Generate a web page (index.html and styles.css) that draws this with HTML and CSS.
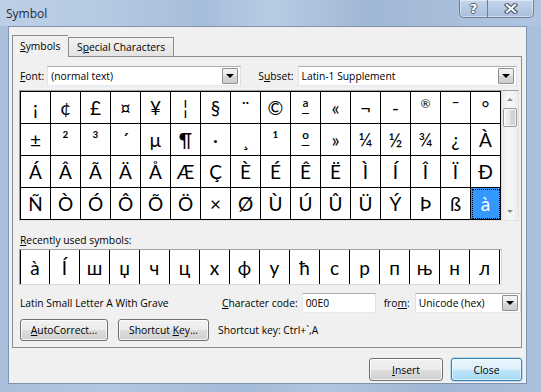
FILE: index.html
```html
<!DOCTYPE html>
<html lang="en">
<head>
    <meta charset="UTF-8">
    <meta name="viewport" content="width=device-width, initial-scale=1.0">
    <title>Symbol</title>
    <link rel="stylesheet" href="styles.css">
</head>
<body>
<div class="window">
    <div class="titlebar">
        <span class="title">Symbol</span>
        <div class="caption-btns">
            <span class="cbtn help">?</span>
            <span class="cbtn close">
                <svg width="14" height="11" viewBox="0 0 14 11">
                    <path d="M3 2 L11 9 M11 2 L3 9" stroke="#4d5d73" stroke-width="4.4" stroke-linecap="square"/>
                    <path d="M3 2 L11 9 M11 2 L3 9" stroke="#fff" stroke-width="2.2" stroke-linecap="square"/>
                </svg>
            </span>
        </div>
    </div>

    <div class="client">
        <div class="tabs">
            <div class="tab active"><u>S</u>ymbols</div>
            <div class="tab">S<u>p</u>ecial Characters</div>
        </div>

        <div class="page">
            <div class="select-row">
                <span class="lbl"><u>F</u>ont:</span>
                <div class="combo font-combo">
                    <span class="combo-text">(normal text)</span>
                    <span class="drop"><i></i></span>
                </div>
                <span class="lbl subset-lbl">S<u>u</u>bset:</span>
                <div class="combo subset-combo">
                    <span class="combo-text">Latin-1 Supplement</span>
                    <span class="drop"><i></i></span>
                </div>
            </div>

            <div class="charmap">
                <div class="symgrid" id="symgrid"></div>
                <div class="vscroll">
                    <span class="arrow up"></span>
                    <span class="thumb"></span>
                    <span class="track"></span>
                    <span class="arrow down"></span>
                </div>
            </div>

            <div class="recent-lbl"><u>R</u>ecently used symbols:</div>
            <div class="recent" id="recent"></div>

            <div class="info-row">
                <span class="char-name">Latin Small Letter A With Grave</span>
                <span class="lbl code-lbl"><u>C</u>haracter code:</span>
                <div class="textbox">00E0</div>
                <span class="lbl from-lbl">fro<u>m</u>:</span>
                <div class="combo from-combo">
                    <span class="combo-text">Unicode (hex)</span>
                    <span class="drop"><i></i></span>
                </div>
            </div>

            <div class="btn-row">
                <button class="btn autocorrect"><u>A</u>utoCorrect...</button>
                <button class="btn shortcut">Shortcut <u>K</u>ey...</button>
                <span class="shortcut-text">Shortcut key: Ctrl+`,A</span>
            </div>
        </div>

        <div class="footer">
            <button class="btn insert"><u>I</u>nsert</button>
            <button class="btn default">Close</button>
        </div>
    </div>
</div>

<script>
    var symbols = '¡¢£¤¥¦§¨©ª«¬-®¯°' +
                  '±²³´µ¶·¸¹º»¼½¾¿À' +
                  'ÁÂÃÄÅÆÇÈÉÊËÌÍÎÏÐ' +
                  'ÑÒÓÔÕÖ×ØÙÚÛÜÝÞßà';
    var recent = ['à', 'Í', 'ш', 'џ', 'ч', 'ц', 'х', 'ф', 'у', 'ћ', 'с', 'р', 'п', 'њ', 'н', 'л'];
    // glyphs the original font draws smaller / underlined
    var extra = { '®': 'reg', 'ª': 'ord', 'º': 'ord' };

    var grid = document.getElementById('symgrid');
    Array.from(symbols).forEach(function (ch, i) {
        var cell = document.createElement('div');
        cell.className = 'cell';
        if (extra[ch]) cell.className += ' ' + extra[ch];
        if (i === 63) cell.className += ' selected';
        cell.textContent = ch;
        grid.appendChild(cell);
    });

    var rec = document.getElementById('recent');
    recent.forEach(function (ch) {
        var cell = document.createElement('div');
        cell.className = 'rcell';
        cell.textContent = ch;
        rec.appendChild(cell);
    });
</script>
</body>
</html>
```
FILE: styles.css
```css
body {
    margin: 0;
    font-family: "Open Sans", "Noto Sans", sans-serif;
    font-size: 10.3px;
    color: #000;
}
.window {
    width: 541px;
    height: 392px;
    background: linear-gradient(90deg, #a9bfdb 0%, #b3c7e0 20%, #a3bad8 45%, #b2c6df 60%, #9fb6d4 80%, #aac0dc 100%);
    overflow: hidden;
}
.titlebar {
    height: 26px;
    display: flex;
    align-items: flex-start;
    background: linear-gradient(90deg, #bccfe6 0%, #b6cae2 18%, #a6bddb 38%, #b9cce4 50%, #a0b7d5 68%, #b0c5df 100%);
}
.title {
    margin: 5px 0 0 6px;
    font-size: 12px;
    color: #1e2b3c;
}
.caption-btns {
    margin-left: auto;
    margin-right: 7px;
    display: flex;
    border: 1px solid #6d7f98;
    border-top: none;
    border-radius: 0 0 5px 5px;
    background: linear-gradient(#c4d5ea, #a9bedb);
    box-shadow: inset 0 0 0 1px rgba(255, 255, 255, 0.45);
    height: 17px;
}
.cbtn {
    display: flex;
    align-items: center;
    justify-content: center;
}
.help {
    width: 27px;
    border-right: 1px solid #6d7f98;
    font: bold 13px "DejaVu Sans", sans-serif;
    color: #fff;
    text-shadow: 1px 0 #4d5d73, -1px 0 #4d5d73, 0 1px #4d5d73, 0 -1px #4d5d73;
}
.close {
    width: 45px;
}
.client {
    box-sizing: border-box;
    width: 519px;
    height: 358px;
    margin-left: 8px;
    padding: 8px 4px 0 3px;
    background: #f0f0f0;
    border: 1px solid #7f94b0;
}

/* tabs */
.tabs {
    display: flex;
    align-items: flex-end;
    height: 21px;
    position: relative;
    z-index: 1;
}
.tab {
    height: 18px;
    padding: 0 8px;
    line-height: 18px;
    white-space: nowrap;
    border: 1px solid #898c95;
    border-bottom: none;
    background: linear-gradient(#f2f2f2, #e3e3e3);
}
.tab.active {
    height: 21px;
    line-height: 20px;
    padding: 0 7px;
    width: 41px;
    background: #f0f0f0;
    margin-bottom: -1px;
    border-right: none;
}
.page {
    box-sizing: border-box;
    width: 510px;
    height: 292px;
    border: 1px solid #898c95;
    padding: 0 0 0 6px;
    background: #f0f0f0;
}
.lbl {
    white-space: nowrap;
}
.select-row {
    display: flex;
    align-items: center;
    height: 20px;
    margin-top: 9px;
    padding-left: 1px;
}
.combo {
    box-sizing: border-box;
    height: 20px;
    border: 1px solid #abadb3;
    border-color: #abadb3 #dbdfe6 #e3e9ef #e2e3ea;
    background: #fff;
    display: flex;
    align-items: center;
    padding: 0 2px 0 3px;
}
.combo-text {
    flex: 1;
}
.drop {
    box-sizing: border-box;
    width: 16px;
    height: 16px;
    border: 1px solid #8f8f8f;
    border-radius: 1px;
    background: linear-gradient(#f3f3f3 0%, #e8e8e8 50%, #d8d8d8 51%, #cdcdcd 100%);
    display: flex;
    align-items: center;
    justify-content: center;
}
.drop i {
    width: 0;
    height: 0;
    border-left: 4px solid transparent;
    border-right: 4px solid transparent;
    border-top: 4px solid #000;
}
.font-combo {
    width: 194px;
    margin-left: 3px;
}
.subset-lbl {
    margin-left: 17px;
}
.subset-combo {
    width: 219px;
    margin-left: 4px;
}

/* character map */
.charmap {
    display: flex;
    width: 500px;
    box-sizing: border-box;
    border: 1px solid #a0a0a0;
    border-right-color: #e3e3e3;
    border-bottom-color: #e3e3e3;
    margin-top: 4px;
    background: #fff;
}
.symgrid {
    display: grid;
    grid-template-columns: repeat(16, 30px);
    grid-auto-rows: 32px;
    border-left: 1px solid #000;
    border-top: 1px solid #000;
}
.cell, .rcell {
    box-sizing: border-box;
    display: flex;
    align-items: center;
    justify-content: center;
    font-family: Lato, "Open Sans", sans-serif;
    font-size: 19px;
    color: #000;
}
.cell {
    border-right: 1px solid #000;
    border-bottom: 1px solid #000;
}
.cell.reg {
    font-size: 12px;
    padding-bottom: 8px;
}
.cell.ord {
    text-decoration: underline;
    text-decoration-thickness: 1px;
    text-underline-offset: -2px;
}
.cell.selected {
    background: #3399ff;
    color: #fff;
    outline: 1px dotted #000;
    outline-offset: -2px;
}
.vscroll {
    width: 17px;
    display: flex;
    flex-direction: column;
    background: linear-gradient(90deg, #e9e9e9, #f5f5f5 30%, #f5f5f5 70%, #e9e9e9);
    border-left: 1px solid #e0e0e0;
}
.arrow {
    height: 17px;
    display: flex;
    align-items: center;
    justify-content: center;
}
.arrow::after {
    content: "";
    border-left: 3px solid transparent;
    border-right: 3px solid transparent;
}
.arrow.up::after {
    border-bottom: 3px solid #8a8a8a;
}
.arrow.down::after {
    border-top: 3px solid #8a8a8a;
}
.thumb {
    height: 17px;
    margin: 0 1px;
    border: 1px solid #9a9a9a;
    border-radius: 2px;
    background: linear-gradient(90deg, #f4f4f4, #e6e6e6 50%, #d8d8d8 51%, #d0d0d0);
    box-shadow: inset 0 0 0 1px rgba(255, 255, 255, 0.7);
}
.track {
    flex: 1;
}

.recent-lbl {
    margin-top: 12px;
    height: 14px;
    line-height: 14px;
    padding-left: 1px;
}
.recent {
    display: flex;
    width: 483px;
    height: 36px;
    box-sizing: border-box;
    margin-top: 2px;
    border: 1px solid #a0a0a0;
    border-right-color: #d8d8d8;
    border-bottom-color: #d8d8d8;
    background: #fff;
}
.rcell {
    width: 30px;
    border-right: 1px solid #000;
}
.rcell:first-child {
    border-left: 1px solid #000;
}

.info-row {
    display: flex;
    align-items: center;
    height: 20px;
    margin-top: 8px;
    padding-left: 1px;
}
.char-name {
    width: 202px;
}
.textbox {
    box-sizing: border-box;
    width: 74px;
    height: 20px;
    margin-left: 4px;
    padding: 0 3px;
    line-height: 18px;
    border: 1px solid #abadb3;
    border-color: #abadb3 #dbdfe6 #e3e9ef #e2e3ea;
    background: #fff;
}
.from-lbl {
    margin-left: 8px;
}
.from-combo {
    width: 106px;
    margin-left: 5px;
}

.btn-row {
    display: flex;
    align-items: center;
    height: 22px;
    margin-top: 6px;
    padding-left: 1px;
}
.btn {
    box-sizing: border-box;
    height: 22px;
    padding: 0;
    font: inherit;
    color: #000;
    border: 1px solid #707070;
    border-radius: 3px;
    background: linear-gradient(#f2f2f2 0%, #ebebeb 50%, #dddddd 51%, #cfcfcf 100%);
    box-shadow: inset 0 0 0 1px rgba(255, 255, 255, 0.75);
}
.autocorrect {
    width: 88px;
}
.shortcut {
    width: 91px;
    margin-left: 10px;
}
.shortcut-text {
    margin-left: 9px;
}

.footer {
    display: flex;
    justify-content: flex-end;
    gap: 8px;
    margin-top: 10px;
}
.footer .btn {
    height: 23px;
}
.btn.insert {
    width: 74px;
}
.btn.default {
    width: 71px;
    border-color: #3c7fb1;
    background: linear-gradient(#eaf6fd 0%, #d9f0fc 50%, #bee6fd 51%, #a7d9f5 100%);
    box-shadow: inset 0 0 0 1px rgba(255, 255, 255, 0.6), 0 0 0 0.5px #7cc5ee;
}
```
